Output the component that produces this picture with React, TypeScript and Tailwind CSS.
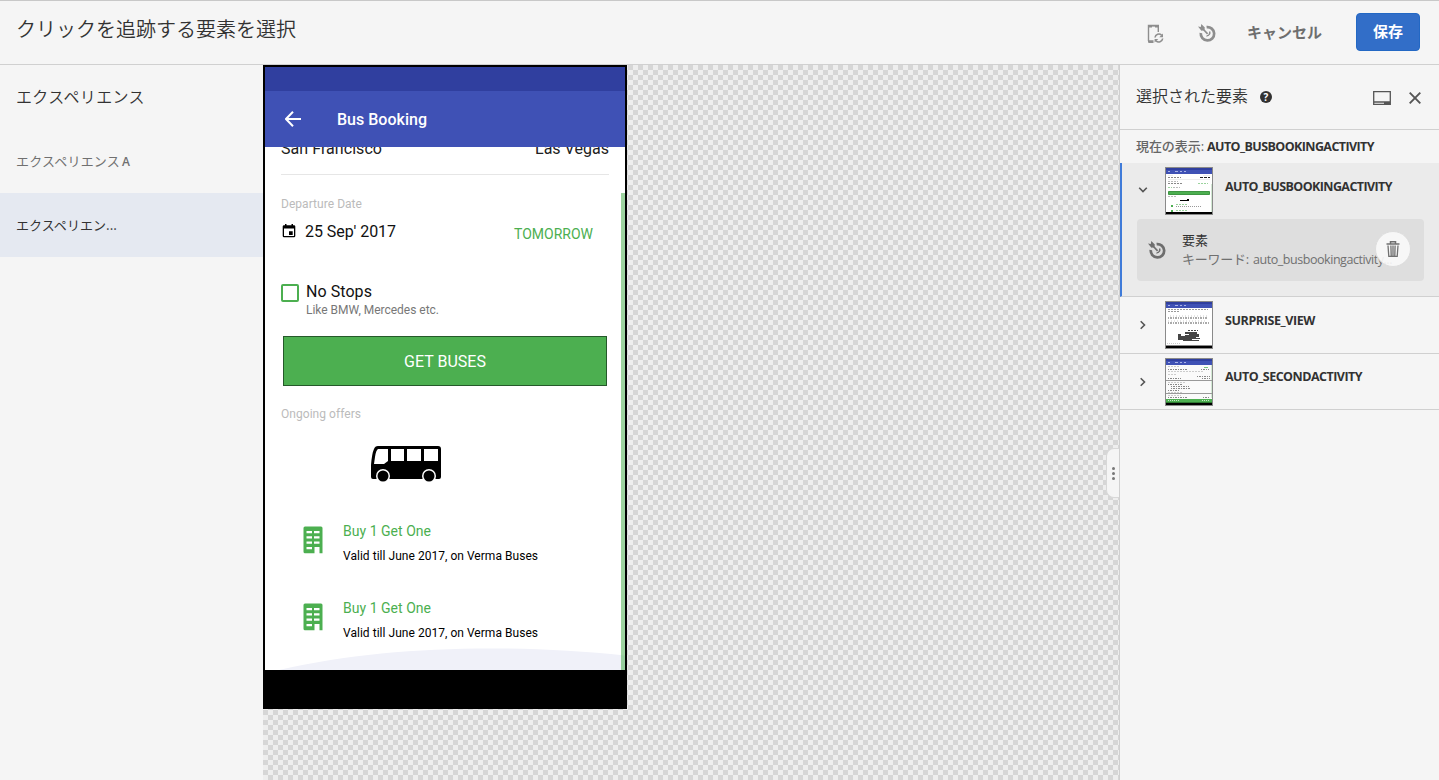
import React from "react";

type TProps = { t: string; w: number; c?: string };

/* A single line of text set to an exact advance width */
function T({ t, w, c = "" }: TProps) {
  const ref = React.useRef<HTMLSpanElement>(null);
  const [ls, setLs] = React.useState(0);
  React.useLayoutEffect(() => {
    if (ref.current) setLs((w - ref.current.getBoundingClientRect().width) / t.length);
  }, [t, w]);
  return (
    <span ref={ref} className={"inline-block shrink-0 whitespace-nowrap " + c} style={{ letterSpacing: ls }}>
      {t}
    </span>
  );
}

function TargetIcon({ c }: { c: string }) {
  return (
    <svg viewBox="0 0 18 18" className={c} fill="none" stroke="currentColor">
      <path d="M8.600 3.100A6.700 6.700 0 1 1 2.800 9" strokeWidth="2.700" />
      <path d="M4.500 4.500L9.600 9.800" strokeWidth="1.700" />
      <path d="M11.800 7.600Q13 11.500 8.600 12L11 10.800Z" fill="currentColor" strokeWidth="1" />
      <path d="M0 2.600L2.800 3L3.300 0L6.800 3.600L6.400 6.300L3.400 6.700Z" fill="currentColor" stroke="none" />
    </svg>
  );
}

function DeviceIcon() {
  return (
    <svg viewBox="0 0 18 20" className="h-5 w-[18px] text-[#8e8e8e]" fill="none" stroke="currentColor">
      <path d="M1.500 17V1.500H11.300V8" strokeWidth="1.400" />
      <path d="M1 1H12V3.500H8V2.500H5V3.500H1ZM1 16.200H6.500V19H2.200Q1 19 1 18Z" fill="currentColor" stroke="none" />
      <path d="M8 13.500A3.900 3.900 0 0 1 14.600 11.200M15.700 14.500A3.900 3.900 0 0 1 9 16.700" strokeWidth="1.600" />
      <path d="M16 9.500V13.200H12.300ZM7.600 18.600V14.900H11.300Z" fill="currentColor" stroke="none" />
    </svg>
  );
}

function Building() {
  return (
    <svg viewBox="0 0 20 28" className="h-7 w-5">
      <path fill="#4caf50" fillRule="evenodd" d="M2 .5H18Q19.500 .5 19.500 2V27.200H16.500V21H11.500V27.200H2Q.5 27.200 .5 25.700V2Q.5 .5 2 .5ZM3.500 5V7.200H9V5ZM11 5V7.200H16.500V5ZM3.500 10.200V12.400H9V10.200ZM11 10.200V12.400H16.500V10.200ZM3.500 15.500V17.700H9V15.500ZM11 15.500V17.700H16.500V15.500ZM3.500 21V23.200H9V21Z" />
    </svg>
  );
}

function Offer() {
  return (
    <div className="flex h-[77px] pl-[22px]">
      <div className="mt-[5px] h-7 w-10"><Building /></div>
      <div className="flex flex-col items-start">
        <T t="Buy 1 Get One" w={88} c="h-5 text-sm leading-5 text-[#4caf50]" />
        <T t="Valid till June 2017, on Verma Buses" w={195} c="mt-[5px] h-5 text-xs leading-5 text-black" />
      </div>
    </div>
  );
}

function Phone() {
  return (
    <div className="flex h-[644px] w-[364px] flex-col border-2 border-black bg-white font-[Roboto,sans-serif]">
      <div className="h-6 shrink-0 bg-[#303f9f]" />
      <div className="flex h-14 shrink-0 items-center bg-[#3f51b5] pl-5 text-white">
        <svg viewBox="0 0 16 16" className="h-4 w-4" fill="none" stroke="white" strokeWidth="2">
          <path d="M8 .8L1 8L8 15.200M1 8H16" />
        </svg>
        <T t="Bus Booking" w={90} c="relative top-px ml-9 text-base leading-6 font-medium" />
      </div>
      <div className="relative flex h-[523px] flex-col overflow-hidden px-4">
        <svg viewBox="0 0 360 22" className="absolute bottom-0 left-0 h-[22px] w-[360px]">
          <path d="M14 22C120 -3 250 -4 360 7.500V22Z" fill="#f0f1f9" />
        </svg>
        <div className="absolute right-0 bottom-0 h-[477px] w-1 bg-[#4caf50]/55" />
        <div className="-mt-[10px] flex h-6 shrink-0 justify-between text-base leading-6 text-[#212121]">
          <T t="San Francisco" w={101} />
          <T t="Las Vegas" w={74} />
        </div>
        <div className="mt-[13px] h-px shrink-0 bg-[#e6e6e6]" />
        <T t="Departure Date" w={81} c="mt-[19px] h-5 self-start text-xs leading-5 text-[#bbb]" />
        <div className="mt-[6px] flex h-6 shrink-0 items-center">
          <svg viewBox="0 0 14 14" className="relative -top-px h-[14px] w-4">
            <path fillRule="evenodd" d="M3 1.300V0H4.500V1.300H9.500V0H11V1.300H12Q13.300 1.300 13.300 2.500V12Q13.300 13.300 12 13.300H2Q.7 13.300 .7 12V2.500Q.7 1.300 2 1.300ZM2 4.500V12H12V4.500ZM7 7.300H10.700V11H7Z" />
          </svg>
          <T t="25 Sep' 2017" w={91} c="ml-2 text-base text-[#111]" />
          <T t="TOMORROW" w={79} c="relative top-[2px] mr-4 ml-auto text-sm text-[#4caf50]" />
        </div>
        <div className="mt-[35px] flex h-11 shrink-0">
          <div className="mt-[5px] h-[18px] w-[18px] rounded-[2px] border-2 border-[#4caf50]" />
          <div className="ml-[7px] flex flex-col items-start">
            <T t="No Stops" w={66} c="relative top-px h-6 text-base leading-6 text-[#111]" />
            <T t="Like BMW, Mercedes etc." w={133} c="-mt-[3px] h-5 text-xs leading-5 text-[#777]" />
          </div>
        </div>
        <div className="mt-[13px] ml-[2px] flex h-[50px] w-[324px] shrink-0 items-center justify-center border border-[#25592a] bg-[#4caf50] text-base text-white">
          <T t="GET BUSES" w={82} c="relative top-px" />
        </div>
        <T t="Ongoing offers" w={80} c="mt-[18px] h-5 self-start text-xs leading-5 text-[#bbb]" />
        <svg viewBox="0 0 70 36" className="mt-[22px] ml-[90px] h-9 w-[70px] shrink-0">
          <path fillRule="evenodd" d="M7 0H67Q70 0 70 3V31Q70 33 68 33H2Q0 33 0 31V19Q1 7 3 3Q4 0 7 0ZM7 3Q5 4 4 11L3 18H13L17 15V3ZM20 3V15H33V3ZM36 3V15H50V3ZM53 3V15H67V3Z" />
          <circle cx="12" cy="30" r="7" fill="white" /><circle cx="58" cy="30" r="7" fill="white" />
          <circle cx="12" cy="30" r="5.500" /><circle cx="58" cy="30" r="5.500" />
        </svg>
        <div className="mt-[39px] shrink-0"><Offer /><Offer /></div>
      </div>
      <div className="flex-1 bg-black" />
    </div>
  );
}

function Thumb({ kind }: { kind: "bus" | "surprise" | "second" }) {
  return (
    <svg viewBox="0 0 48 48" className="h-12 w-12 shrink-0">
      <path fill="#8a8a8a" d="M0 0H48V48H0Z" />
      <path fill="#fff" d="M1 1H47V47H1Z" />
      <path fill="#3f51b5" d="M1 1H47V7H1Z" />
      <path fill="#303f9f" d="M1 1H47V3H1Z" />
      <path stroke="#aab3e6" d="M3 4.500H5M10 4.500H13M15 4.500H17M19 4.500H21" />
      <path fill="#000" d="M1 45H47V47H1Z" />
      {kind === "bus" && (
        <g fill="none">
          <path stroke="#888" strokeDasharray="2 1" d="M3 10.500H16M3 16.500H18" />
          <path stroke="#222" strokeDasharray="3 1" d="M35 10.500H45" />
          <path stroke="#eee" d="M3 12.500H45M3 8.500H8M38 8.500H45" />
          <path stroke="#bbb" strokeDasharray="2 1" d="M3 14.500H13M3 29.500H12M8 20.500H15" />
          <path stroke="#9bd39d" d="M33 16.500H43M3 20.500H7M11 37.500H22M11 43.500H22" strokeDasharray="2 1" />
          <path fill="#4caf50" stroke="#3f9543" d="M3.500 24.500H44.500V27.500H3.500Z" />
          <path stroke="#d2e8d3" d="M46.500 17V45" />
          <path fill="#000" d="M15 33H22V32H24V34H15Z" />
          <path fill="#4caf50" d="M6 38H8V40H6ZM6 43H8V45H6Z" />
          <path stroke="#999" strokeDasharray="1 1" d="M11 39.500H36" />
        </g>
      )}
      {kind === "surprise" && (
        <g fill="none">
          <path stroke="#999" strokeDasharray="2 1" d="M3 8.500H43M3 10.500H14" />
          <path stroke="#aaa" strokeWidth="2" strokeDasharray="1 1 2 1" d="M3 17H43M3 22H44" />
          <path stroke="#ccc" strokeDasharray="1 2" d="M5 15H42M3 20H42" />
          <path fill="#454545" d="M20 31H32V33H34V36H31V37H35V38H27V39H34V40H18V39H13V33H16V35H20V34H24V33H20Z" />
          <path stroke="#454545" strokeDasharray="2 1" d="M23 29.500H33" />
          <path stroke="#ccc" strokeDasharray="1 1" d="M2 42.500H15" />
          <path stroke="#888" d="M1 44.500H47" />
        </g>
      )}
      {kind === "second" && (
        <g fill="none">
          <path fill="#fafafa" d="M1 7H47V41H1Z" />
          <path stroke="#888" strokeDasharray="1 1 2 1" d="M3 11.500H22M36 11.500H44M3 20.500H16M32 18.500H45M37 20.500H45M3 26.500H18M6 28.500H24M6 30.500H25M3 32.500H14M3 39.500H22M38 39.500H44" />
          <path stroke="#ccc" strokeDasharray="2 1" d="M3 8.500H14M3 13.500H39M3 16.500H12M3 24.500H21M3 34.500H18M3 37.500H16" />
          <path stroke="#7bc67e" d="M39 9.500H43" />
          <path stroke="#d2e8d3" d="M46.500 7V40" />
          <path stroke="#999" d="M1 22.500H47M1 35.500H47" />
          <path fill="#4caf50" d="M1 41H47V44H1Z" />
          <path stroke="#c8e6c9" strokeDasharray="1 1" d="M3 42.500H14M37 42.500H45" />
          <path stroke="#2f7a33" d="M1 44.500H47" />
        </g>
      )}
    </svg>
  );
}

function Chevron({ open = false }: { open?: boolean }) {
  return (
    <svg viewBox="0 0 10 10" className={open ? "h-[10px] w-[10px] rotate-90" : "h-[10px] w-[10px]"} fill="none" stroke="#555" strokeWidth="1.600">
      <path d="M2.700 1.200L6.500 5L2.700 8.800" />
    </svg>
  );
}

const checker =
  "bg-[conic-gradient(#d6d6d6_25%,#eee_0_50%,#d6d6d6_0_75%,#eee_0)] bg-[length:10px_10px]";

export default function App() {
  return (
    <div className="flex h-[780px] w-[1439px] flex-col overflow-hidden border-t border-[#c8c8c8] bg-[#f5f5f5] font-['Open_Sans','Noto_Sans_CJK_JP',sans-serif] text-[#323232]">
      <header className="flex h-16 shrink-0 items-center border-b border-[#d0d0d0] pr-[19px] pl-4">
        <T t="クリックを追跡する要素を選択" w={280} c="relative -top-1 font-['Noto_Sans_CJK_JP'] text-xl font-[350]" />
        <div className="ml-auto flex items-center">
          <div className="relative top-px flex"><DeviceIcon /></div>
          <div className="relative -left-px ml-[34px] flex"><TargetIcon c="h-[18px] w-[18px] text-[#8e8e8e]" /></div>
          <T t="キャンセル" w={75} c="ml-[30px] text-[15px] font-bold text-[#6e6e6e]" />
          <button className="relative -top-px ml-[34px] flex h-[38px] w-16 items-center justify-center rounded border border-[#2368c4] bg-[#326ec8] text-[15px] font-bold text-white">
            <T t="保存" w={30} />
          </button>
        </div>
      </header>
      <div className="flex min-h-0 flex-1">
        <aside className="w-[263px] shrink-0 font-['Noto_Sans_CJK_JP']">
          <div className="flex h-16 items-center pl-4 text-base"><T t="エクスペリエンス" w={129} c="relative -top-px font-[350]" /></div>
          <div className="flex h-16 items-center pl-4 text-[13px] text-[#707070]">
            <T t="エクスペリエンス" w={104} />
            <T t="A" w={8} c="relative top-px ml-[2px] font-['Open_Sans'] text-xs font-semibold" />
          </div>
          <div className="flex h-16 items-center bg-[#e5e9f1] pl-4 text-[13px]"><T t="エクスペリエン..." w={101} /></div>
        </aside>
        <main className={"relative min-w-0 flex-1 " + checker}>
          <Phone />
          <div className="absolute top-[383px] right-0 flex h-[50px] w-[13px] flex-col items-center justify-center gap-[2px] rounded-l-lg border border-r-0 border-[#d8d8d8] bg-[#f5f5f5]">
            <i className="h-[3px] w-[3px] rounded-full bg-[#777]" />
            <i className="h-[3px] w-[3px] rounded-full bg-[#777]" />
            <i className="h-[3px] w-[3px] rounded-full bg-[#777]" />
          </div>
        </main>
        <aside className="w-[320px] shrink-0 border-l border-[#d0d0d0]">
          <div className="flex h-[65px] items-center border-b border-[#d0d0d0] pr-[18px] pl-4">
            <T t="選択された要素" w={112} c="relative -top-[2px] font-['Noto_Sans_CJK_JP'] text-base font-[350]" />
            <span className="ml-3 flex h-3 w-3 items-center justify-center rounded-full bg-[#323232] text-[10px] font-bold text-white">?</span>
            <svg viewBox="0 0 18 14" className="relative top-px ml-auto h-[14px] w-[18px]" fill="none" stroke="#555" strokeWidth="1.300">
              <path d="M.7 .7H17.300V13.300H.7ZM1 11H17" /><path d="M11 12H17" strokeWidth="2" />
            </svg>
            <svg viewBox="0 0 12 12" className="relative top-px ml-[18px] h-3 w-3" stroke="#555" strokeWidth="1.900"><path d="M.7 .7L11.300 11.300M11.300 .7L.7 11.300" /></svg>
          </div>
          <div className="flex h-[33px] items-center gap-[3px] pl-4 text-[13px]">
            <T t="現在の表示:" w={68} c="font-medium text-[#666]" />
            <T t="AUTO_BUSBOOKINGACTIVITY" w={167} c="relative top-px text-[12.5px] font-bold" />
          </div>
          <div className="h-[134px] border-b border-l-2 border-b-[#d0d0d0] border-l-[#3f7bd9] bg-[#ebebeb]">
            <div className="flex h-14 pt-1">
              <div className="mt-[18px] ml-4 w-[27px]"><Chevron open /></div>
              <Thumb kind="bus" />
              <T t="AUTO_BUSBOOKINGACTIVITY" w={167} c="mt-[10px] ml-3 h-5 text-[12.5px] leading-5 font-bold" />
            </div>
            <div className="relative ml-[15px] flex h-[62px] w-[287px] items-center rounded bg-[#dedede] pl-[11px]">
              <TargetIcon c="h-[18px] w-[18px] text-[#6e6e6e]" />
              <div className="ml-4 flex flex-col items-start text-[13px] leading-[19px]">
                <T t="要素" w={26} />
                <div className="flex gap-1 text-[#707070]">
                  <T t="キーワード:" w={67} />
                  <T t="auto_busbookingactivity..." w={139} c="text-[12.5px] leading-[19px]" />
                </div>
              </div>
              <button className="absolute top-3 right-[13px] flex h-9 w-9 items-center justify-center rounded-full border border-[#ddd] bg-[#fafafa]/90">
                <svg viewBox="0 0 14 16" className="h-4 w-[14px]" fill="none" stroke="#707070">
                  <path d="M.5 3H13.500M4.500 2.500V.8H9.500V2.500" strokeWidth="1.500" />
                  <path d="M2 4.500L2.800 15.300H11.200L12 4.500M4.900 4.500L5.200 15M7 4.500V15M9.100 4.500L8.800 15" strokeWidth="1.300" />
                </svg>
              </button>
            </div>
          </div>
          <div className="flex h-[57px] border-b border-[#d0d0d0] pt-1">
            <div className="mt-[19px] ml-[18px] w-[27px]"><Chevron /></div>
            <Thumb kind="surprise" />
            <T t="SURPRISE_VIEW" w={90} c="mt-[10px] ml-3 h-5 text-[12.5px] leading-5 font-bold" />
          </div>
          <div className="flex h-14 border-b border-[#d0d0d0] pt-1">
            <div className="mt-[19px] ml-[18px] w-[27px]"><Chevron /></div>
            <Thumb kind="second" />
            <T t="AUTO_SECONDACTIVITY" w={137} c="mt-[9px] ml-3 h-5 text-[12.5px] leading-5 font-bold" />
          </div>
        </aside>
      </div>
    </div>
  );
}
